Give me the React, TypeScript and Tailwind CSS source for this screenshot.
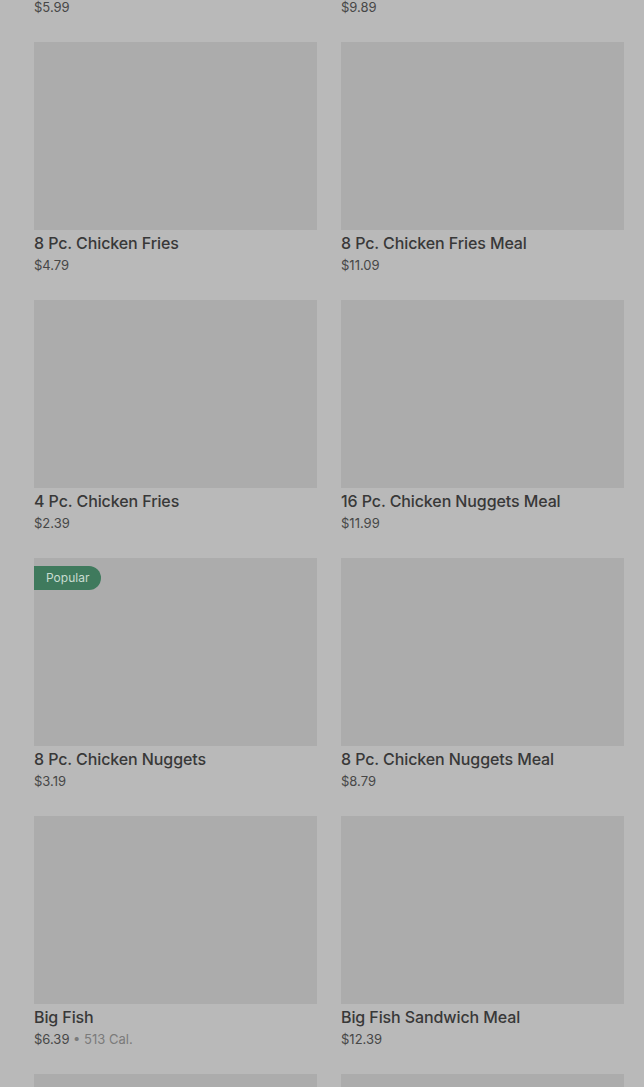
const items = [
  { name: "Item A", price: "$5.99" },
  { name: "Item B", price: "$9.89" },
  { name: "8 Pc. Chicken Fries", price: "$4.79" },
  { name: "8 Pc. Chicken Fries Meal", price: "$11.09" },
  { name: "4 Pc. Chicken Fries", price: "$2.39" },
  { name: "16 Pc. Chicken Nuggets Meal", price: "$11.99" },
  { name: "8 Pc. Chicken Nuggets", price: "$3.19", popular: true },
  { name: "8 Pc. Chicken Nuggets Meal", price: "$8.79" },
  { name: "Big Fish", price: "$6.39", cal: "513 Cal." },
  { name: "Big Fish Sandwich Meal", price: "$12.39" },
  { name: "", price: "" },
  { name: "", price: "" },
];

export default function App() {
  return (
    <div
      className="h-[1087px] w-[644px] overflow-hidden bg-[#b9b9b9]"
      style={{ fontFamily: "Inter, Roboto, sans-serif" }}
    >
      <div className="mt-[-216px] grid grid-cols-2 gap-x-6 gap-y-[25px] pl-[34px] pr-5">
        {items.map((item, i) => (
          <div key={i} className="flex flex-col">
            <div className="relative h-[188px] bg-[#acacac]">
              {item.popular && (
                <span className="absolute left-0 top-2 flex h-6 items-center rounded-r-full bg-[#3f7a5d] pl-3 pr-3 text-xs text-[#c9dcd1]">
                  Popular
                </span>
              )}
            </div>
            <div className="mt-px text-base font-medium leading-6 tracking-[-0.1px] text-[#383838]">{item.name}</div>
            <div className="text-[13px] leading-5 text-[#474747]">
              {item.price}
              {item.cal && <span className="text-[#7b7b7b]"> • {item.cal}</span>}
            </div>
          </div>
        ))}
      </div>
    </div>
  );
}
